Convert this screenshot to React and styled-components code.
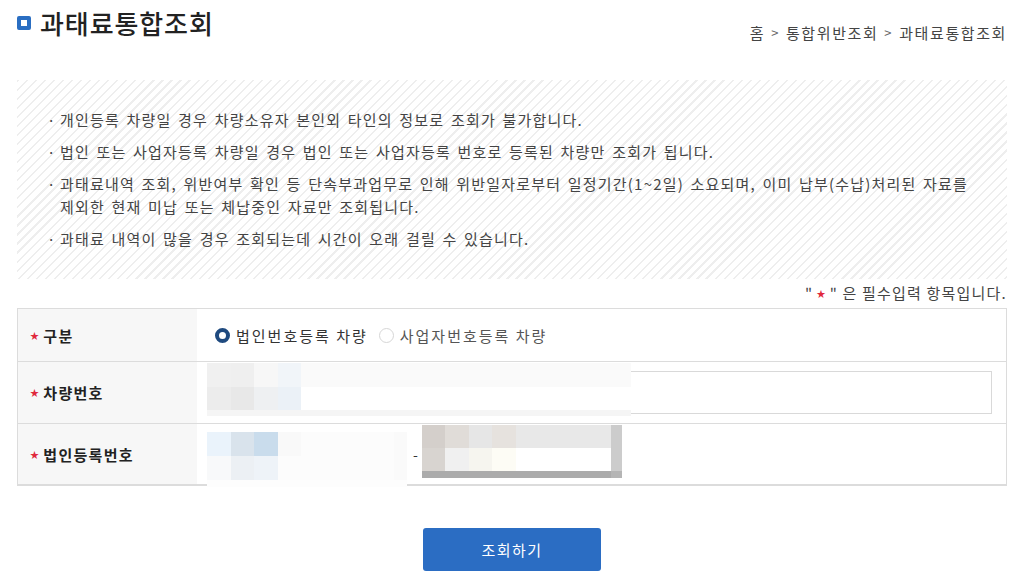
import React from "react";
import styled, { createGlobalStyle } from "styled-components";

const GlobalStyle = createGlobalStyle`
  body {
    margin: 0;
    background: #fff;
    font-family: "Noto Sans CJK KR", "Noto Sans", sans-serif;
    color: #333;
  }
`;

const Page = styled.div`
  width: 1024px;
  padding: 0 17px;
  box-sizing: border-box;
`;

const Header = styled.div`
  display: flex;
  justify-content: space-between;
  align-items: flex-start;
  padding-top: 6px;
  height: 80px;
  box-sizing: border-box;
`;

const TitleRow = styled.h2`
  display: flex;
  align-items: center;
  gap: 9px;
  margin: 0;
  font-size: 26px;
  font-weight: 500;
  line-height: 34px;
  color: #222;
  letter-spacing: 0.9px;
`;

const TitleMark = styled.span`
  width: 14px;
  height: 14px;
  box-sizing: border-box;
  border: 4px solid #2a6ec2;
  border-radius: 2px;
  background: #fff;
  flex-shrink: 0;
`;

const Breadcrumb = styled.div`
  display: flex;
  align-items: center;
  margin-top: 17px;
  font-size: 15px;
  line-height: 20px;
  color: #444;
  letter-spacing: 1.6px;
`;

const Sep = styled.span`
  margin: 0 6px;
  font-size: 13px;
  color: #666;
`;

const Notice = styled.ul`
  list-style: none;
  margin: 0;
  padding: 28px 30px 29px 30px;
  background: repeating-linear-gradient(
    135deg,
    #eeeeee 0 1.6px,
    #ffffff 1.6px 6.4px
  );
`;

const NoticeItem = styled.li`
  display: flex;
  font-size: 15px;
  line-height: 23px;
  color: #444;
  letter-spacing: 1.2px;
  word-spacing: 2px;
  & + & {
    margin-top: 9px;
  }
`;

const Dot = styled.span`
  width: 13px;
  flex-shrink: 0;
`;

const RequiredNote = styled.p`
  margin: 4px 0 4px;
  text-align: right;
  font-size: 15px;
  line-height: 20px;
  color: #444;
  letter-spacing: 1.2px;
`;

const Star = styled.span`
  color: #e0283c;
  font-size: 9px;
  vertical-align: 2px;
  margin: ${(p) => p.$margin || "0"};
`;

const Table = styled.div`
  border: 1px solid #dcdcdc;
  border-bottom-width: 2px;
`;

const Row = styled.div`
  display: grid;
  grid-template-columns: 179px 1fr;
  height: ${(p) => p.$h}px;
  & + & {
    border-top: 1px solid #dcdcdc;
  }
`;

const Label = styled.div`
  display: flex;
  align-items: center;
  padding-left: 12px;
  background: #f7f7f7;
  font-size: 15px;
  font-weight: 700;
  color: #222;
  letter-spacing: 1.3px;
`;

const Cell = styled.div`
  display: flex;
  align-items: center;
  padding: 0 14px 0 10px;
`;

const RadioGroup = styled.div`
  display: flex;
  align-items: center;
  gap: 11px;
  padding-left: 8px;
  font-size: 15px;
  color: #444;
  letter-spacing: 2px;
`;

const RadioLabel = styled.label`
  display: flex;
  align-items: center;
  gap: 6px;
  color: ${(p) => (p.$checked ? "#333" : "#555")};
`;

const RadioMark = styled.span`
  width: 15px;
  height: 15px;
  box-sizing: border-box;
  border-radius: 50%;
  border: ${(p) => (p.$checked ? "4.5px solid #1f4a7f" : "1px solid #d6d6d6")};
  background: #fff;
`;

const Field = styled.div`
  position: relative;
  width: ${(p) => p.$w};
  height: 43px;
  border: 1px solid #d9d9d9;
  box-sizing: border-box;
  background: #fff;
`;

const Mosaic = styled.div`
  position: absolute;
  left: -1px;
  top: ${(p) => p.$top}px;
  width: ${(p) => p.$w}px;
  display: grid;
  grid-template-columns: ${(p) => p.$cols};
  grid-template-rows: ${(p) => p.$rows};
`;

const Tile = styled.span`
  background: ${(p) => p.$bg};
`;

const Dash = styled.span`
  margin: 0 4px 0 6px;
  font-size: 14px;
  color: #333;
`;

const ButtonBar = styled.div`
  display: flex;
  justify-content: center;
  margin-top: 42px;
`;

const SearchButton = styled.button`
  width: 178px;
  height: 43px;
  border: none;
  border-radius: 3px;
  background: #2b6dc3;
  color: #fff;
  font-family: inherit;
  font-size: 15px;
  letter-spacing: 1.4px;
`;

const notices = [
  "개인등록 차량일 경우 차량소유자 본인외 타인의 정보로 조회가 불가합니다.",
  "법인 또는 사업자등록 차량일 경우 법인 또는 사업자등록 번호로 등록된 차량만 조회가 됩니다.",
  "과태료내역 조회, 위반여부 확인 등 단속부과업무로 인해 위반일자로부터 일정기간(1~2일) 소요되며, 이미 납부(수납)처리된 자료를 제외한 현재 미납 또는 체납중인 자료만 조회됩니다.",
  "과태료 내역이 많을 경우 조회되는데 시간이 오래 걸릴 수 있습니다.",
];

// blurred (pixelated) field contents, as in the capture
const carMosaic = [
  ["#f0f0f0", "#efefef", "#f7f7f7", "#f1f5f9", "#fafafa"],
  ["#ececec", "#e8e8e8", "#eef0f2", "#ebf1f7", "#ffffff"],
  ["#f5f5f5", "#f5f5f5", "#f5f5f5", "#f5f5f5", "#f5f5f5"],
];

const corpMosaicA = [
  ["#eaf3fb", "#d9e3ec", "#c9dcec", "#f9f9f9", "#fcfcfc", "#fafafa"],
  ["#f8f9fa", "#ecf0f4", "#eef3f8", "#fcfcfc", "#fcfcfc", "#fafafa"],
  ["#fdfdfd", "#fdfdfd", "#fdfdfd", "#fdfdfd", "#fdfdfd", "#fdfdfd"],
];

const corpMosaicB = [
  ["#d4cfcb", "#e0dcd8", "#e6e6e6", "#e6e2de", "#e8e8e8", "#cccccc"],
  ["#d8d4d0", "#f0f0f0", "#f6f5ef", "#fdfcf5", "#ffffff", "#cccccc"],
  ["#ababab", "#ababab", "#ababab", "#ababab", "#ababab", "#b5b5b5"],
];

const MosaicBlock = ({ tiles, top, w, cols, rows }) => (
  <Mosaic $top={top} $w={w} $cols={cols} $rows={rows}>
    {tiles.flat().map((bg, i) => (
      <Tile key={i} $bg={bg} />
    ))}
  </Mosaic>
);

export default function App() {
  return (
    <>
      <GlobalStyle />
      <Page>
        <Header>
          <TitleRow>
            <TitleMark />
            과태료통합조회
          </TitleRow>
          <Breadcrumb>
            홈<Sep>&gt;</Sep>통합위반조회<Sep>&gt;</Sep>과태료통합조회
          </Breadcrumb>
        </Header>

        <Notice>
          {notices.map((t) => (
            <NoticeItem key={t}>
              <Dot>·</Dot>
              <span>{t}</span>
            </NoticeItem>
          ))}
        </Notice>

        <RequiredNote>
          "<Star $margin="0 3px">★</Star>" 은 필수입력 항목입니다.
        </RequiredNote>

        <Table>
          <Row $h={52}>
            <Label>
              <Star $margin="0 3px 0 0">★</Star>구분
            </Label>
            <Cell>
              <RadioGroup>
                <RadioLabel $checked>
                  <RadioMark $checked />
                  법인번호등록 차량
                </RadioLabel>
                <RadioLabel>
                  <RadioMark />
                  사업자번호등록 차량
                </RadioLabel>
              </RadioGroup>
            </Cell>
          </Row>
          <Row $h={61}>
            <Label>
              <Star $margin="0 3px 0 0">★</Star>차량번호
            </Label>
            <Cell>
              <Field $w="100%">
                <MosaicBlock
                  tiles={carMosaic}
                  top={-9}
                  w={424}
                  cols="23.5px 23.5px 23.5px 23.5px 1fr"
                  rows="24px 23px 6px"
                />
              </Field>
            </Cell>
          </Row>
          <Row $h={60}>
            <Label>
              <Star $margin="0 3px 0 0">★</Star>법인등록번호
            </Label>
            <Cell>
              <Field $w="200px">
                <MosaicBlock
                  tiles={corpMosaicA}
                  top={-2}
                  w={200}
                  cols="23.5px 23.5px 23.5px 23.5px 1fr 13px"
                  rows="24px 24px 7px"
                />
              </Field>
              <Dash>-</Dash>
              <Field $w="200px">
                <MosaicBlock
                  tiles={corpMosaicB}
                  top={-9}
                  w={200}
                  cols="23.5px 23.5px 23.5px 23.5px 1fr 11px"
                  rows="23px 23px 7px"
                />
              </Field>
            </Cell>
          </Row>
        </Table>

        <ButtonBar>
          <SearchButton type="button">조회하기</SearchButton>
        </ButtonBar>
      </Page>
    </>
  );
}
